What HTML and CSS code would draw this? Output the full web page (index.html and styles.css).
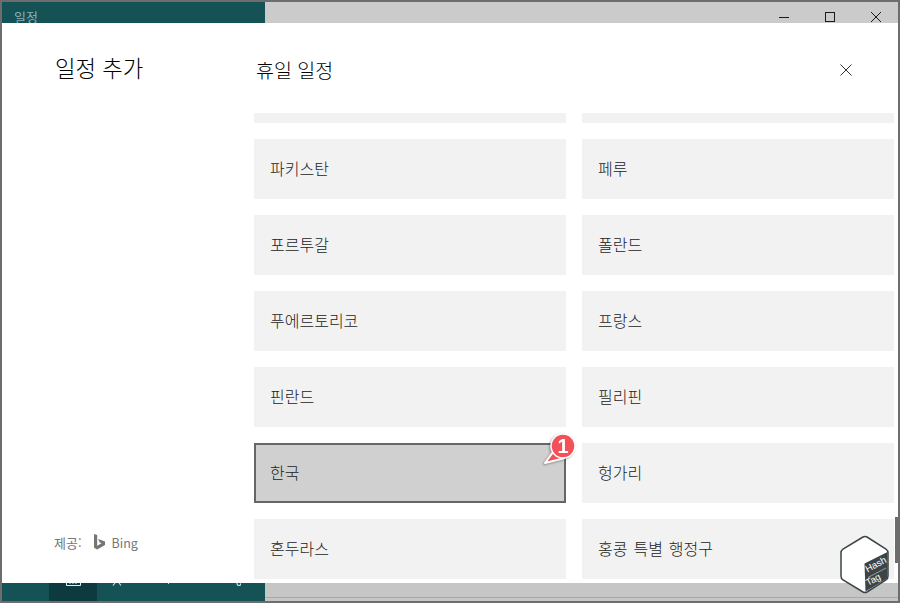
FILE: index.html
```html
<!DOCTYPE html>
<html lang="ko">
<head>
<meta charset="utf-8">
<title>일정</title>
<link rel="stylesheet" href="styles.css">
</head>
<body>
<div class="window">
  <header class="titlebar">
    <div class="app-title"><span>일정</span></div>
    <div class="controls">
      <svg class="ctl" width="46" height="21" viewBox="0 0 46 21"><path d="M19 15.500h10" stroke="#1a1a1a" fill="none"/></svg>
      <svg class="ctl" width="46" height="21" viewBox="0 0 46 21"><rect x="19.500" y="10.500" width="9" height="9" stroke="#1a1a1a" fill="none"/></svg>
      <svg class="ctl" width="46" height="21" viewBox="0 0 46 21"><path d="M19 10l10 10M29 10l-10 10" stroke="#1a1a1a" fill="none"/></svg>
    </div>
  </header>
  <main class="dialog">
    <aside class="side">
      <h1 class="side-title">일정 추가</h1>
      <div class="provider">
        <span>제공:</span>
        <svg class="bing" width="11" height="16" viewBox="0 0 11 16"><path d="M0 0l3.200 1.100v10.700l4.300-2.500-2-1-1.300-3.200 6.800 2.400v3.400l-7.800 4.600-3.200-1.800z" fill="#767676"/></svg>
        <span class="bing-name">Bing</span>
      </div>
    </aside>
    <section class="content">
      <div class="content-head">
        <h2 class="content-title">휴일 일정</h2>
        <svg class="close" width="12" height="12" viewBox="0 0 12 12"><path d="M.5.500l11 11M11.500.500l-11 11" stroke="#333" fill="none"/></svg>
      </div>
      <div class="list">
        <div class="grid">
          <div class="card"></div><div class="card"></div>
          <div class="card">파키스탄</div><div class="card">페루</div>
          <div class="card">포르투갈</div><div class="card">폴란드</div>
          <div class="card">푸에르토리코</div><div class="card">프랑스</div>
          <div class="card">핀란드</div><div class="card">필리핀</div>
          <div class="card selected">한국
            <svg class="badge" width="40" height="42" viewBox="0 0 40 42">
              <path d="M19 12L5 31l20-5" fill="#f4505a" stroke="#fff" stroke-width="2" stroke-linejoin="round"/>
              <circle cx="23" cy="14" r="12" fill="#f4505a" stroke="#fff" stroke-width="1.500"/>
              <text x="23" y="21" text-anchor="middle" class="badge-num">1</text>
            </svg>
          </div>
          <div class="card">헝가리</div>
          <div class="card">혼두라스</div><div class="card">홍콩 특별 행정구</div>
        </div>
        <div class="thumb"></div>
      </div>
    </section>
  </main>
  <footer class="bottombar">
    <div class="nav">
      <div class="nav-item active">
        <svg class="nav-icon" width="48" height="3" viewBox="0 0 48 3"><path d="M17.500 0v2.500h14V0M21 0v1M24 0v1M27 0v1" stroke="#e6eeee" fill="none"/></svg>
      </div>
      <svg class="nav-icon" width="48" height="3" viewBox="0 0 48 3"><path d="M16 2.500L18 0M24 2.500L22 0" stroke="#cfdcdc" stroke-width="1.200" fill="none"/></svg>
      <svg class="nav-icon" width="48" height="3" viewBox="0 0 48 3"><path d="M23.500 0v1" stroke="#cfdcdc" fill="none"/></svg>
      <svg class="nav-icon" width="48" height="3" viewBox="0 0 48 3"><path d="M44 0q0 2.500 2 2.500t2-2.500" stroke="#cfdcdc" stroke-width="1.200" fill="none"/></svg>
    </div>
    <div class="bottom-rest"></div>
  </footer>
  <svg class="hashtag" width="50" height="59" viewBox="0 0 50 59">
    <path d="M23 2Q25 1 27 2L46 14Q48 15.500 48 18V41Q48 43.500 46 45L27 57Q25 58 23 57L3 45Q1 43.500 1 41V18Q1 15.500 3 14Z" fill="#fff" stroke="#3b4447" stroke-width="1.500"/>
    <path d="M47.500 17V41.500Q47.500 43.500 45.500 44.500L25.500 56.500L24.500 28.500Z" fill="#3b4447"/>
    <text x="0" y="0" class="tag-text" transform="translate(27.500 37.500) rotate(-28)">Hash</text>
    <path d="M28 42.500L46 33" stroke="#aeb4b5" stroke-width=".8" fill="none"/>
    <text x="0" y="0" class="tag-text" transform="translate(28 51) rotate(-28)">Tag</text>
  </svg>
</div>
</body>
</html>
```
FILE: styles.css
```css
* { box-sizing: border-box; }
html, body { margin: 0; padding: 0; }
body { width: 900px; height: 603px; overflow: hidden; font-family: "Noto Sans CJK KR", "Noto Sans", sans-serif; background: #fff; }
.window { position: relative; width: 900px; height: 603px; border: 2px solid #6d6d6d; display: flex; flex-direction: column; overflow: hidden; }
.titlebar { height: 21px; display: flex; background: #cbcbcb; flex: none; }
.app-title { width: 263px; background: #145256; color: #8fb0b2; font-size: 13px; padding: 5px 0 0 12px; line-height: 20px; overflow: hidden; }
.controls { margin-left: auto; display: flex; }
.ctl { display: block; }
.dialog { flex: none; height: 560px; background: #fff; display: flex; }
.side { width: 252px; padding: 26px 0 0 53px; display: flex; flex-direction: column; }
.side-title { margin: 0; font-weight: 300; font-size: 22.300px; line-height: 36px; color: #000; }
.provider { margin: auto 0 31px -1px; display: flex; align-items: center; font-size: 13px; color: #767676; height: 20px; }
.bing { margin: 0 7px 0 12px; }
.bing-name { font-size: 12.500px; }
.content { flex: 1; display: flex; flex-direction: column; min-width: 0; }
.content-head { height: 90px; display: flex; align-items: flex-start; padding: 32px 0 0 2px; justify-content: space-between; flex: none; }
.content-title { margin: 0; font-size: 19.500px; font-weight: 300; line-height: 30px; color: #000; }
.close { margin: 9px 46px 0 0; }
.list { position: relative; height: 466px; overflow: hidden; }
.grid { display: grid; grid-template-columns: 312px 312px; grid-auto-rows: 60px; gap: 16px; margin-top: -50px; }
.card { position: relative; background: #f2f2f2; font-size: 16px; color: #222; padding: 0 0 2px 16px; display: flex; align-items: center; word-spacing: 1.500px; font-weight: 300; }
.selected { background: #d0d0d0; border: 2px solid #666; padding-left: 14px; }
.badge { position: absolute; right: -16px; top: -13px; filter: drop-shadow(-1px 1px 1px rgba(0, 0, 0, .35)); }
.badge-num { font: 700 20px "Liberation Sans", sans-serif; fill: #fff; }
.thumb { position: absolute; right: 0; top: 404px; width: 3px; height: 46px; background: #6d6d6d; }
.bottombar { height: 18px; display: flex; flex: none; background: linear-gradient(#c6c6c6 0 14px, #a9a9a9 14px 15px, #c6c6c6 15px); }
.nav { width: 263px; background: #145256; padding-left: 47px; display: flex; align-items: flex-start; }
.nav-item { width: 48px; height: 18px; background: #0d3a3f; flex: none; }
.nav-icon { display: block; flex: none; }
.bottom-rest { flex: 1; }
.hashtag { position: absolute; right: 8px; bottom: 7px; }
.tag-text { font: 400 9.500px "Liberation Sans", sans-serif; fill: #fff; }
```
